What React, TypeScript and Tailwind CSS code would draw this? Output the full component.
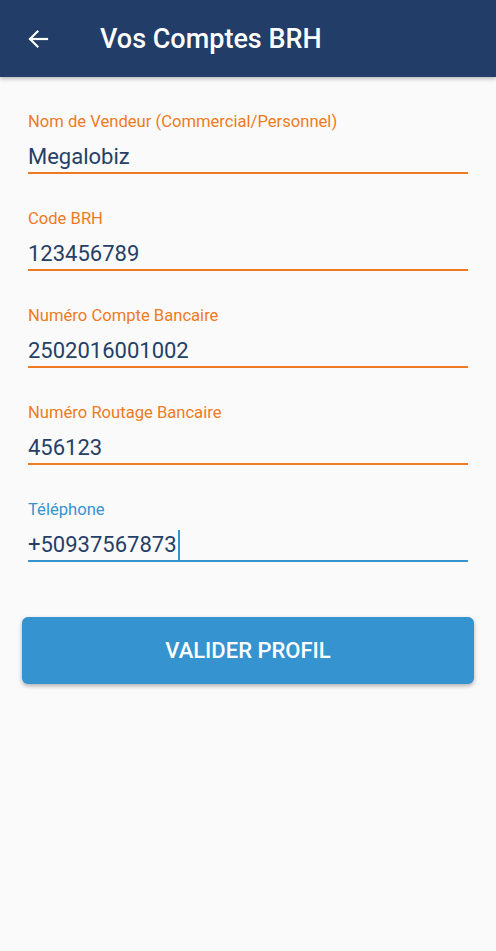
import React from "react";

const fields = [
  { label: "Nom de Vendeur (Commercial/Personnel)", value: "Megalobiz" },
  { label: "Code BRH", value: "123456789" },
  { label: "Numéro Compte Bancaire", value: "2502016001002" },
  { label: "Numéro Routage Bancaire", value: "456123" },
];

export default function App() {
  return (
    <div className="w-[496px] h-[951px] bg-[#fafafa] flex flex-col" style={{ fontFamily: "Roboto, 'Liberation Sans', sans-serif" }}>
      <div className="h-[77px] bg-[#213d68] flex items-center shadow-[0_2px_4px_rgba(0,0,0,0.25)] shrink-0">
        <svg className="ml-[26px] mt-[1px]" width="24" height="24" viewBox="0 0 24 24" fill="none" stroke="white" strokeWidth="2.2" strokeLinecap="square">
          <path d="M21 12H4.5" />
          <path d="M11.5 4.5L4 12l7.5 7.5" />
        </svg>
        <div className="ml-[50px] text-white text-[27px] font-medium leading-none mt-[2px]">Vos Comptes BRH</div>
      </div>
      <div className="px-[28px] pt-[32px] flex flex-col">
        {fields.map((f) => (
          <div key={f.label} className="flex flex-col h-[97px]">
            <div className="text-[#ee7a22] text-[16.6px] leading-[24px] pt-[1px]">{f.label}</div>
            <div className="text-[#253f67] text-[22px] leading-[30px] mt-[8px]">{f.value}</div>
            <div className="h-[2px] bg-[#ee7a22]" />
          </div>
        ))}
        <div className="flex flex-col h-[97px]">
          <div className="text-[#3593d0] text-[16.6px] leading-[24px] pt-[1px]">Téléphone</div>
          <div className="text-[#253f67] text-[22px] leading-[30px] mt-[8px] flex items-center">
            <span>+50937567873</span>
            <span className="inline-block w-[2px] h-[30px] bg-[#3593d0] ml-[1px]" />
          </div>
          <div className="h-[2px] bg-[#3593d0]" />
        </div>
      </div>
      <div className="px-[22px] mt-[23px]">
        <div className="h-[67px] rounded-[6px] bg-[#3593d0] flex items-center justify-center text-white text-[22px] font-medium shadow-[0_2px_4px_rgba(0,0,0,0.3)]">
          VALIDER PROFIL
        </div>
      </div>
    </div>
  );
}
